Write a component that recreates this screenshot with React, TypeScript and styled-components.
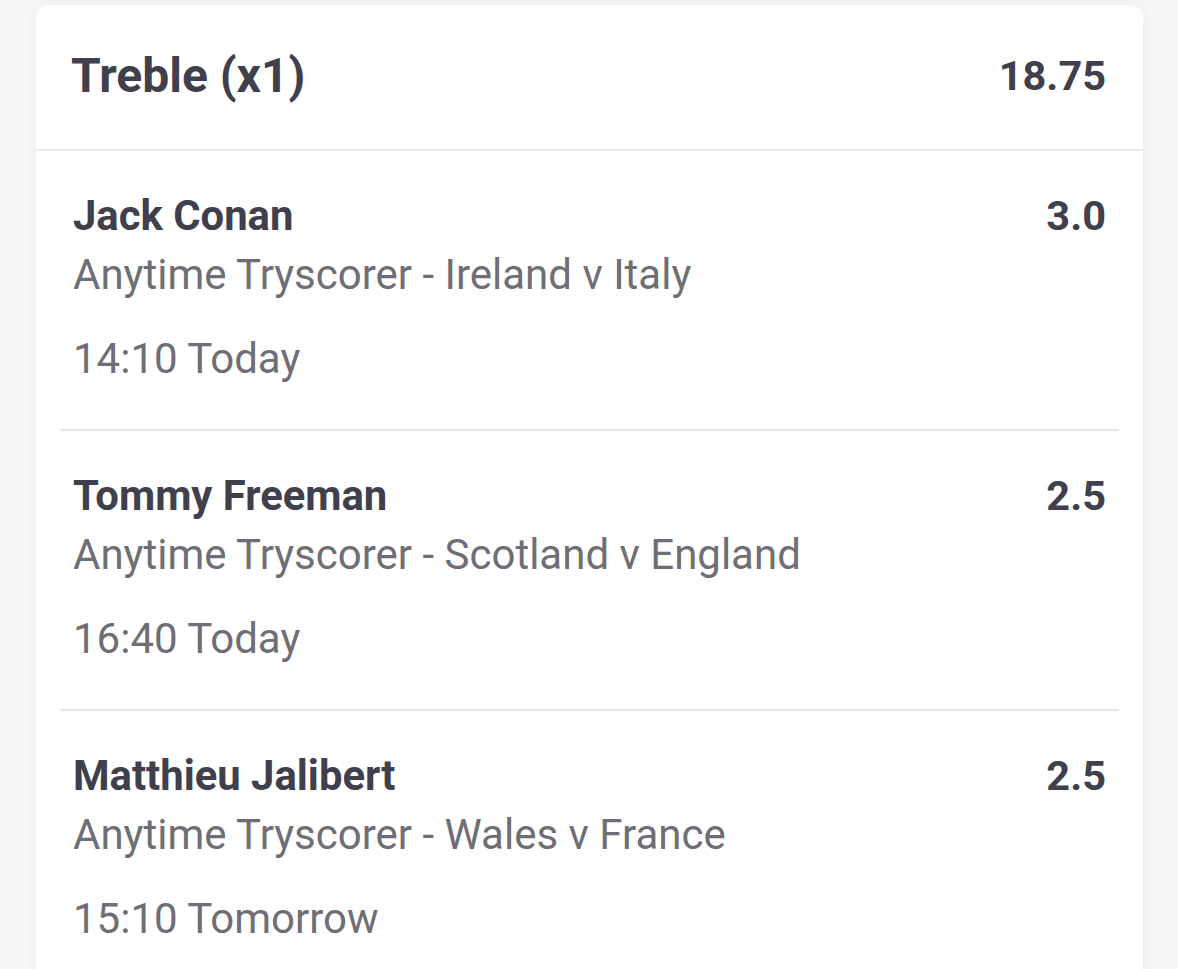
import React from "react";
import styled, { createGlobalStyle } from "styled-components";

const GlobalStyle = createGlobalStyle`
  html, body {
    margin: 0;
    padding: 0;
    background: #f7f7f8;
    font-family: Roboto, "Liberation Sans", Arial, sans-serif;
  }
  * { box-sizing: border-box; }
`;

const Page = styled.div`
  padding: 5px 35px 0 36px;
  height: 969px;
  overflow: hidden;
`;

const Card = styled.section`
  background: #ffffff;
  border-radius: 12px;
  box-shadow: 0 0 14px rgba(0, 0, 0, 0.05);
  overflow: hidden;
`;

const Header = styled.header`
  display: flex;
  align-items: center;
  justify-content: space-between;
  height: 146px;
  padding: 0 37px 4px 35px;
  border-bottom: 2px solid #e8e8eb;
`;

const Title = styled.h1`
  margin: 0;
  font-size: 48px;
  font-weight: 700;
  color: #40404c;
  line-height: normal;
`;

const HeaderOdds = styled.span`
  font-size: 41.5px;
  font-weight: 700;
  color: #40404c;
`;

const Leg = styled.div`
  margin: 0 24px;
  padding: 41px 13px 45px;
  border-bottom: 2px solid #e6e6ea;
  display: flex;
  justify-content: space-between;
  align-items: flex-start;
`;

const LegInfo = styled.div`
  display: flex;
  flex-direction: column;
`;

const Name = styled.div`
  font-size: 41.8px;
  font-weight: 700;
  line-height: 48px;
  color: #40404c;
`;

const Market = styled.div<{ $gap: number }>`
  margin-top: ${(p) => p.$gap}px;
  font-size: 42px;
  font-weight: 400;
  line-height: 50px;
  color: #6e6e74;
`;

const Odds = styled.div`
  font-size: 41.5px;
  font-weight: 700;
  line-height: 48px;
  color: #40404c;
`;

const legs = [
  { name: "Jack Conan", market: "Anytime Tryscorer - Ireland v Italy", time: "14:10 Today", odds: "3.0" },
  { name: "Tommy Freeman", market: "Anytime Tryscorer - Scotland v England", time: "16:40 Today", odds: "2.5" },
  { name: "Matthieu Jalibert", market: "Anytime Tryscorer - Wales v France", time: "15:10 Tomorrow", odds: "2.5" },
];

export default function App() {
  return (
    <>
      <GlobalStyle />
      <Page>
        <Card>
          <Header>
            <Title>Treble (x1)</Title>
            <HeaderOdds>18.75</HeaderOdds>
          </Header>
          {legs.map((l) => (
            <Leg key={l.name}>
              <LegInfo>
                <Name>{l.name}</Name>
                <Market $gap={10}>{l.market}</Market>
                <Market $gap={34}>{l.time}</Market>
              </LegInfo>
              <Odds>{l.odds}</Odds>
            </Leg>
          ))}
        </Card>
      </Page>
    </>
  );
}
